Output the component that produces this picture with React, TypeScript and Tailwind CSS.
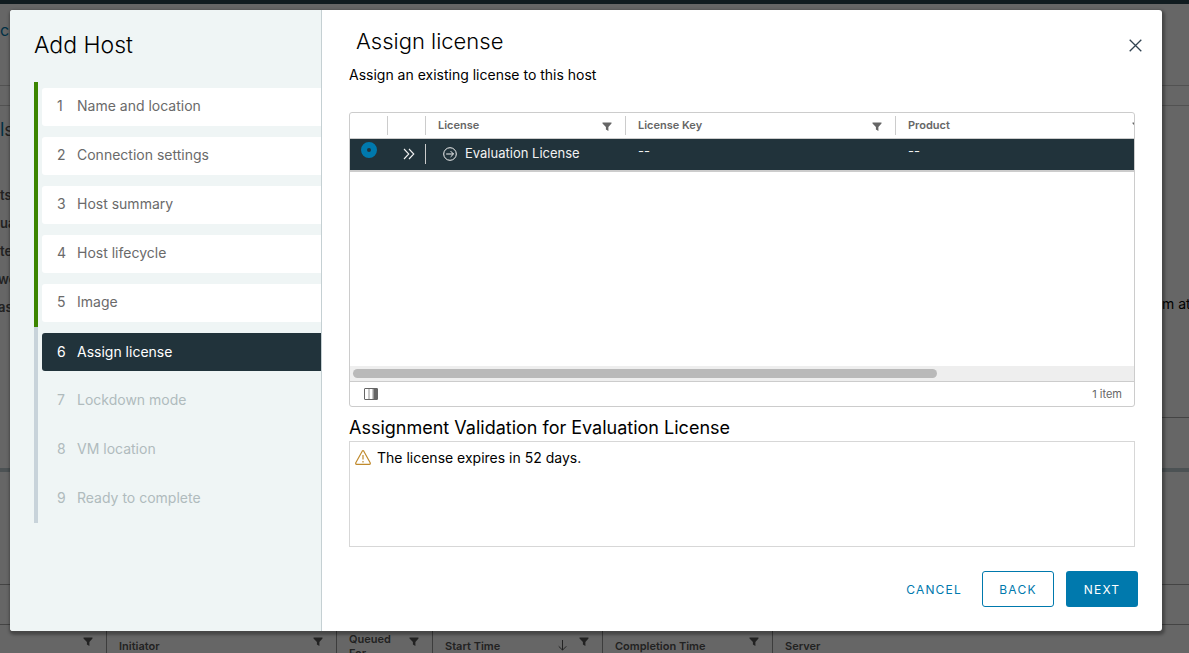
import { useState } from "react";
import type { ReactNode } from "react";

const steps = [
  "Name and location",
  "Connection settings",
  "Host summary",
  "Host lifecycle",
  "Image",
  "Assign license",
  "Lockdown mode",
  "VM location",
  "Ready to complete",
];
const current = 5;

function FilterIcon() {
  return (
    <svg viewBox="0 0 10 9" className="block h-[9px] w-2.5 shrink-0" fill="currentColor" aria-hidden="true">
      <path d="M0.5 0.5h9v1L6.4 4.9V9L3.9 7.6V4.9L0.5 1.5z" />
    </svg>
  );
}

function DoubleAngleIcon() {
  return (
    <svg viewBox="0 0 12 12" className="block size-3" fill="none" stroke="currentColor" strokeWidth="1.1" aria-hidden="true">
      <path d="M1 1l4.8 5L1 11M6 1l4.8 5L6 11" />
    </svg>
  );
}

function ArrowCircleIcon() {
  return (
    <svg viewBox="0 0 14 14" className="block size-3.5 shrink-0" fill="none" stroke="currentColor" strokeWidth="1" aria-hidden="true">
      <circle cx="7" cy="7" r="6.3" />
      <path d="M3.2 7h7.3M7.6 4.1L10.5 7 7.6 9.9" />
    </svg>
  );
}

function ColumnsIcon() {
  return (
    <svg viewBox="0 0 14 12" className="block h-3 w-3.5" fill="none" stroke="currentColor" aria-hidden="true">
      <rect x="0.5" y="0.5" width="13" height="11" rx="0.5" />
      <path d="M5 0.5v11M9 0.5v11" strokeOpacity="0.7" />
      <rect x="9.5" y="0.5" width="4" height="11" fill="currentColor" stroke="none" />
    </svg>
  );
}

function WarningIcon() {
  return (
    <svg viewBox="0 0 16 15" className="block h-[15px] w-4 shrink-0" fill="none" stroke="currentColor" strokeWidth="1.2" strokeLinejoin="round" aria-hidden="true">
      <path d="M7.2 1.2Q8 0 8.8 1.2L15.2 12.8Q15.6 14.2 14.4 14.3H1.6Q.4 14.2.8 12.8z" />
      <path d="M8 5v4.6M8 11v1.4" />
    </svg>
  );
}

function HeaderCell({ children, filter = true }: { children: ReactNode; filter?: boolean }) {
  return (
    <th scope="col" className="h-[26px] p-0 text-left font-semibold">
      <div className="flex h-[19px] items-center justify-between border-l border-[#ccc] pr-[13px] pl-3">
        {children}
        {filter && (
          <button type="button" aria-label="Filter column" className="pt-0.5">
            <FilterIcon />
          </button>
        )}
      </div>
    </th>
  );
}

function LicenseGrid() {
  const [selected, setSelected] = useState(true);
  return (
    <section className="mt-[27px] flex min-h-0 flex-1 flex-col overflow-hidden rounded-[3px] border border-[#ccc]">
      <div className="min-h-0 flex-1 overflow-hidden">
        <table className="w-[1048px] table-fixed border-separate border-spacing-0">
          <colgroup>
            <col className="w-[37px]" />
            <col className="w-[38px]" />
            <col className="w-[200px]" />
            <col className="w-[270px]" />
            <col className="w-[260px]" />
            <col />
          </colgroup>
          <thead className="text-[11px] text-[#666] [&_td]:border-b [&_td]:border-[#ccc] [&_th]:border-b [&_th]:border-[#ccc]">
            <tr>
              <td />
              <td className="p-0">
                <div className="h-[19px] border-l border-[#ccc]" />
              </td>
              <HeaderCell>License</HeaderCell>
              <HeaderCell>License Key</HeaderCell>
              <HeaderCell>Product</HeaderCell>
              <td />
            </tr>
          </thead>
          <tbody className="text-[13px] text-[#f2f2f2] [&_td]:border-b-2 [&_td]:border-[#ccc]">
            <tr className="h-[33px] bg-[#21333b]">
              <td className="p-0 pb-2.5 align-middle">
                <input
                  type="radio"
                  name="license"
                  aria-label="Evaluation License"
                  checked={selected}
                  onChange={() => setSelected(true)}
                  className="mx-auto block size-4 appearance-none rounded-full border-[6px] border-[#0079ad] bg-[#21333b]"
                />
              </td>
              <td className="p-0 pb-0.5">
                <button type="button" aria-label="Show details" className="flex w-full justify-center pl-1.5">
                  <DoubleAngleIcon />
                </button>
              </td>
              <td className="p-0 pb-0.5">
                <div className="flex h-5 items-center gap-2 border-l border-[#ccc] pl-[17px]">
                  <ArrowCircleIcon />
                  <span className="whitespace-nowrap">Evaluation License</span>
                </div>
              </td>
              <td className="p-0 pb-1.5 pl-[13px]">--</td>
              <td className="p-0 pb-1.5 pl-[13px]">--</td>
              <td />
            </tr>
          </tbody>
        </table>
      </div>
      <div className="h-[15px] shrink-0 bg-[#eee] px-[3px] py-[3px]">
        <div className="h-[9px] w-3/4 rounded-full bg-[#b9b9b9]" />
      </div>
      <footer className="flex h-[25px] shrink-0 items-center justify-between border-t border-[#ccc] pr-3 pl-3.5 text-[11px] text-[#666]">
        <button type="button" aria-label="Manage columns">
          <ColumnsIcon />
        </button>
        <span>1 item</span>
      </footer>
    </section>
  );
}

function WizardNav() {
  return (
    <aside className="w-[312px] shrink-0 border-r border-[#c5d0d3] bg-[#eff5f5] pt-5 pl-6">
      <h1 className="text-[23px] leading-[30px] font-light text-black">Add Host</h1>
      <ol className="mt-[22px] text-sm">
        {steps.map((label, i) => {
          const tone =
            i < current
              ? "bg-white text-[#6a6a6a]"
              : i === current
                ? "bg-[#21333b] text-white"
                : "text-[#b0bbbd]";
          return (
            <li
              key={label}
              className={`h-[49px] border-l-4 pt-1.5 pl-1 ${i < current ? "border-[#3c8500]" : "border-[#c8d3da]"}`}
            >
              <button
                type="button"
                disabled={i > current}
                aria-current={i === current ? "step" : undefined}
                className={`flex h-[38px] w-full items-center rounded-l-[3px] pl-[15px] text-left ${i === current ? "" : "pb-0.5"} ${tone}`}
              >
                <span className="w-5">{i + 1}</span>
                {label}
              </button>
            </li>
          );
        })}
      </ol>
    </aside>
  );
}

function Wizard() {
  return (
    <div role="dialog" aria-modal="true" aria-label="Add Host" className="flex flex-1 overflow-hidden rounded-[3px] bg-white shadow-[1px_2px_3px_2px_rgba(0,0,0,0.3)]">
      <WizardNav />
      <div className="flex min-w-0 flex-1 flex-col">
        <div className="flex min-h-0 flex-1 flex-col px-[27px]">
          <header className="flex items-start justify-between pt-5 pl-[7px]">
            <h2 className="text-[22px] leading-[22px] font-light text-black">Assign license</h2>
            <button type="button" aria-label="Close" className="-mr-2 pt-[9px] pr-px text-[#314351]">
              <svg viewBox="0 0 13 13" className="block size-[13px]" fill="none" stroke="currentColor" strokeWidth="1.3" aria-hidden="true">
                <path d="M0.7 0.7l11.6 11.6M12.3 0.7L0.7 12.3" />
              </svg>
            </button>
          </header>
          <p className="mt-[13px] text-sm text-black">Assign an existing license to this host</p>
          <LicenseGrid />
          <h3 className="mt-[9px] text-lg leading-6 text-black">Assignment Validation for Evaluation License</h3>
          <div className="mt-px flex h-[106px] shrink-0 items-start gap-1.5 border border-[#d7d7d7] pt-1.5 pl-[5px] text-sm text-black">
            <span className="pt-0.5 text-[#c08a2c]">
              <WarningIcon />
            </span>
            The license expires in 52 days.
          </div>
        </div>
        <footer className="flex justify-end gap-3 px-6 py-6 text-xs tracking-widest">
          <button type="button" className="h-9 px-2 pt-0.5 text-[#0079ad]">CANCEL</button>
          <button type="button" className="h-9 w-[72px] rounded-[3px] border border-[#0079ad] pt-0.5 text-[#0079ad]">BACK</button>
          <button type="button" className="h-9 w-[72px] rounded-[3px] bg-[#0079ad] pt-0.5 text-white">NEXT</button>
        </footer>
      </div>
    </div>
  );
}

function TaskHeader({ children, className }: { children?: ReactNode; className: string }) {
  return (
    <div className={`flex shrink-0 justify-between border-r border-[#999] pr-[13px] pl-3 ${className}`}>
      {children}
    </div>
  );
}

function HostPage() {
  return (
    <div className="flex h-full flex-col overflow-hidden bg-white" aria-hidden="true">
      <div className="h-1 shrink-0 bg-[#2b4650]" />
      <div className="h-[81px] shrink-0 pt-4 text-base leading-5 text-[#0079ad]">c</div>
      <div className="h-[21px] shrink-0 border-y border-[#ccc]" />
      <div className="flex h-[362px] shrink-0 justify-between">
        <div className="pt-2.5 text-[13px] leading-7 font-semibold text-[#565656]">
          <div className="mb-[37px] text-lg font-normal">
            <span className="text-[#0079ad]">l</span>s
          </div>
          <div>ts</div>
          <div>ua</div>
          <div>te</div>
          <div className="-ml-0.5">wo</div>
          <div className="-ml-0.5">as</div>
        </div>
        <div className="flex w-[27px] flex-col text-sm whitespace-nowrap text-black">
          <div className="h-[312px] border-b border-[#aaa] pt-[188px]">m at</div>
        </div>
      </div>
      <div className="h-1 shrink-0 bg-[#bdced2]" />
      <div className="h-[112px] shrink-0" />
      <div className="h-[41px] shrink-0 border-y border-[#aaa]" />
      <div className="flex h-8 shrink-0 text-[11px] leading-3.5 font-semibold text-[#555]">
        <TaskHeader className="w-[107px]">
          <span />
          <span className="pt-3"><FilterIcon /></span>
        </TaskHeader>
        <TaskHeader className="w-[230px]">
          <span className="pt-3.5">Initiator</span>
          <span className="pt-3"><FilterIcon /></span>
        </TaskHeader>
        <TaskHeader className="w-24">
          <span className="w-12 pt-[7px]">Queued For</span>
          <span className="pt-3"><FilterIcon /></span>
        </TaskHeader>
        <TaskHeader className="w-[170px]">
          <span className="pt-3.5">Start Time</span>
          <span className="flex gap-3 pt-3">
            <svg viewBox="0 0 9 11" className="mt-[3px] h-[11px] w-[9px]" fill="none" stroke="currentColor">
              <path d="M4.5 0v10M.7 6.3l3.8 3.8 3.8-3.8" />
            </svg>
            <FilterIcon />
          </span>
        </TaskHeader>
        <TaskHeader className="w-[170px]">
          <span className="pt-3.5">Completion Time</span>
          <span className="pt-3"><FilterIcon /></span>
        </TaskHeader>
        <div className="flex-1 pt-3.5 pl-3">Server</div>
      </div>
    </div>
  );
}

export default function App() {
  return (
    <div className="relative h-screen overflow-hidden font-['Inter','Noto_Sans',sans-serif]">
      <HostPage />
      <div className="absolute inset-0 flex bg-black/60 pt-2.5 pr-[27px] pb-[22px] pl-2.5">
        <Wizard />
      </div>
    </div>
  );
}
